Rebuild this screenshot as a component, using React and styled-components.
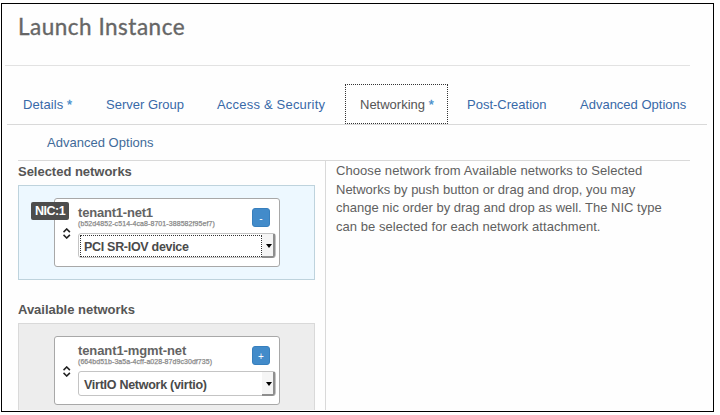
import React from "react";
import styled, { createGlobalStyle } from "styled-components";

const Global = createGlobalStyle`
  *, *::before, *::after { box-sizing: border-box; }
  html, body { margin: 0; background: #fff; overflow: hidden; }
  body { font: 13px/19px "Liberation Sans", Arial, sans-serif; color: #555; }
`;

const Dialog = styled.main`
  width: 713px;
  height: 409px;
  margin: 3px 0 0 1px;
  border: 1px solid #000;
  background: #fefefe;
  overflow: hidden;
`;

const Header = styled.header`
  height: 62px;
  width: 685px;
  margin-left: 3px;
  padding: 8px 0 0 13px;
  border-bottom: 1px solid #e2e2e2;
`;

const Title = styled.h1`
  margin: 0;
  font: 400 22.5px/30px Lato, sans-serif;
  letter-spacing: 0.5px;
  color: #666;
  -webkit-text-stroke: 0.35px #666;
  white-space: nowrap;
`;

const Tabs = styled.nav`
  display: flex;
  align-items: flex-end;
  gap: 4px;
  width: 700px;
  height: 59px;
  margin-left: 5px;
  padding-left: 1px;
  border-bottom: 1px solid #d9d9d9;
`;

const Tab = styled.a`
  flex: none;
  width: ${(p) => p.$w}px;
  height: 40px;
  padding-left: ${(p) => (p.$active ? 14 : 15)}px;
  border: ${(p) => (p.$active ? "1px dotted #333" : "0")};
  line-height: ${(p) => (p.$active ? 39 : 41)}px;
  letter-spacing: ${(p) => p.$ls || 0}px;
  color: ${(p) => (p.$active ? "#555" : "#3869a8")};
  white-space: nowrap;
`;

const Star = styled.span`
  color: #428bca;
  -webkit-text-stroke: 0.3px #428bca;
`;

const SubTabs = styled.div`
  height: 36px;
  width: 672px;
  margin-left: 16px;
  padding-left: 29px;
  border-bottom: 1px solid #d9d9d9;
  line-height: 36px;
  letter-spacing: 0.02px;
  color: #416a99;
`;

const Body = styled.div`
  display: flex;
  height: 249px;
  margin-left: 16px;
  overflow: hidden;
`;

const Networks = styled.section`
  width: 308px;
  border-right: 1px solid #d9d9d9;
`;

const Group = styled.section`
  height: 138px;
`;

const GroupTitle = styled.h2`
  margin: 0;
  height: 24px;
  font: bold 13px/22px "Liberation Sans", Arial, sans-serif;
  letter-spacing: -0.02px;
  white-space: nowrap;
`;

const DropZone = styled.div`
  width: 297px;
  height: 95px;
  padding: 12px 0 0 35px;
  border: 1px solid ${(p) => (p.$selected ? "#bed3dd" : "#d9d9d9")};
  background: ${(p) => (p.$selected ? "#edf8ff" : "#ededed")};
`;

const Card = styled.article`
  position: relative;
  display: flex;
  width: 226px;
  height: 69px;
  border: 1px solid #a8a8a8;
  border-radius: 3px;
  background: #fff;
`;

const Handle = styled.div`
  width: 23px;
  padding: 29px 0 0 8px;
  line-height: 0;
`;

const Badge = styled.span`
  position: absolute;
  left: -24px;
  top: 3px;
  width: 38px;
  height: 18px;
  padding-left: 4px;
  border-radius: 2px;
  background: #4d4d4d;
  color: #fff;
  font: bold 12.5px/19px "Liberation Sans", Arial, sans-serif;
  letter-spacing: -0.5px;
  white-space: nowrap;
`;

const Details = styled.div`
  width: 198px;
`;

const Summary = styled.div`
  display: flex;
  justify-content: space-between;
  height: 34px;
  padding-right: 6px;
`;

const Name = styled.div`
  padding-top: 6px;
  font-weight: bold;
  line-height: 15px;
  letter-spacing: ${(p) => p.$ls}px;
  color: #636363;
  white-space: nowrap;
`;

const Id = styled.div`
  font-size: 7px;
  line-height: 8px;
  letter-spacing: ${(p) => p.$ls}px;
  font-weight: 400;
  color: #8a8a8a;
  -webkit-text-stroke: 0.25px #8a8a8a;
  white-space: nowrap;
`;

const Action = styled.button`
  width: 18px;
  height: 19px;
  margin-top: 9px;
  padding: 2px 0 0;
  border: 1px solid #377fbd;
  border-radius: 3px;
  background: #428bca;
  color: #fff;
  font: 10px/16px "Liberation Sans", Arial, sans-serif;
  text-align: center;
`;

const Select = styled.div`
  display: flex;
  width: 198px;
  height: 25px;
  border: 1px solid #c4c4c4;
  border-radius: 3px;
  background: #fff;
`;

const Value = styled.span`
  width: 182px;
  height: 22px;
  margin: 1px 0 0 1px;
  padding-left: 3px;
  border: 1px dotted ${(p) => (p.$focus ? "#333" : "transparent")};
  font-weight: bold;
  font-size: 12.5px;
  line-height: 22px;
  letter-spacing: ${(p) => p.$ls}px;
  color: #4a4a4a;
  white-space: nowrap;
`;

const Arrow = styled.span`
  flex: none;
  width: 13px;
  height: 24px;
  padding: 10px 0 0 4px;
  border-right: 2px solid #8e8e8e;
  border-bottom: 2px solid #8e8e8e;
  border-radius: 0 0 3px 0;
  background: #f5f5f5;
  line-height: 0;
`;

const Help = styled.div`
  padding: 1px 0 0 10px;
  line-height: 18.6px;
  color: #606060;
`;

const HelpLine = styled.div`
  letter-spacing: ${(p) => p.$ls}px;
  white-space: nowrap;
`;

function Network({ badge, name, nameLs, id, idLs, value, valueLs, action, focus }) {
  return (
    <Card>
      {badge && <Badge>{badge}</Badge>}
      <Handle>
        <svg width="8" height="11" viewBox="0 0 8 11" fill="none" stroke="#222" strokeWidth="1.6">
          <path d="M.5 4.1 3.7 1 6.9 4.1M.5 6.9 3.7 10 6.9 6.9" />
        </svg>
      </Handle>
      <Details>
        <Summary>
          <div>
            <Name $ls={nameLs}>{name}</Name>
            <Id $ls={idLs}>{id}</Id>
          </div>
          <Action>{action}</Action>
        </Summary>
        <Select>
          <Value $focus={focus} $ls={valueLs}>{value}</Value>
          <Arrow>
            <svg width="6" height="4" viewBox="0 0 6 4">
              <path d="M0 0h6L3 4Z" fill="#000" />
            </svg>
          </Arrow>
        </Select>
      </Details>
    </Card>
  );
}

export default function App() {
  return (
    <>
      <Global />
      <Dialog>
        <Header>
          <Title>Launch Instance</Title>
        </Header>
        <Tabs>
          <Tab $w={79} $ls={0.08}>Details <Star>*</Star></Tab>
          <Tab $w={107}>Server Group</Tab>
          <Tab $w={139} $ls={0.2}>Access &amp; Security</Tab>
          <Tab $w={103} $active>Networking <Star>*</Star></Tab>
          <Tab $w={109}>Post-Creation</Tab>
          <Tab $w={126}>Advanced Options</Tab>
        </Tabs>
        <SubTabs>Advanced Options</SubTabs>
        <Body>
          <Networks>
            <Group>
              <GroupTitle>Selected networks</GroupTitle>
              <DropZone $selected>
                <Network
                  badge="NIC:1"
                  name="tenant1-net1"
                  nameLs={-0.2}
                  id="(b52d4852-c514-4ca8-8701-388582f95ef7)"
                  idLs={0.08}
                  value="PCI SR-IOV device"
                  valueLs={-0.3}
                  action="-"
                  focus
                />
              </DropZone>
            </Group>
            <Group>
              <GroupTitle>Available networks</GroupTitle>
              <DropZone>
                <Network
                  name="tenant1-mgmt-net"
                  nameLs={-0.1}
                  id="(664bd51b-3a5a-4cff-a028-87d9c30df735)"
                  idLs={0.06}
                  value="VirtIO Network (virtio)"
                  valueLs={-0.27}
                  action="+"
                />
              </DropZone>
            </Group>
          </Networks>
          <Help>
            <HelpLine $ls={0.06}>Choose network from Available networks to Selected</HelpLine>
            <HelpLine $ls={0}>Networks by push button or drag and drop, you may</HelpLine>
            <HelpLine $ls={0}>change nic order by drag and drop as well. The NIC type</HelpLine>
            <HelpLine $ls={0.05}>can be selected for each network attachment.</HelpLine>
          </Help>
        </Body>
      </Dialog>
    </>
  );
}
